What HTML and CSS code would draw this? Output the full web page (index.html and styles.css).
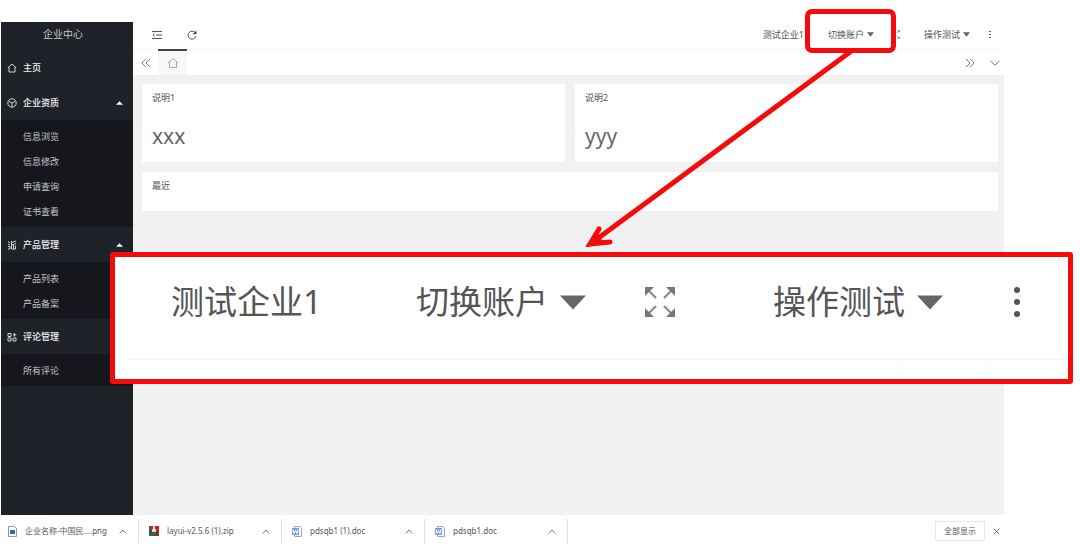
FILE: index.html
```html
<!DOCTYPE html>
<html lang="zh-CN">
<head>
<meta charset="utf-8">
<title>企业中心</title>
<link rel="stylesheet" href="styles.css">
</head>
<body>
<div class="page">
  <div class="app">
    <nav class="sidebar">
      <h1 class="brand">企业中心</h1>
      <a class="group" href="#">
        <svg class="icon" viewBox="0 0 10 10"><path d="M.8 4.800 5 1l4.200 3.800M2 4v5h6V4"/></svg>
        <span>主页</span>
      </a>
      <button class="group" type="button">
        <svg class="icon" viewBox="0 0 10 10"><circle cx="5" cy="5" r="4.200"/><path d="M2 3.500 5 5l3-1.500M5 5v4"/></svg>
        <span>企业资质</span>
        <svg class="fold" viewBox="0 0 8 4"><path d="M0 4 4 0l4 4z"/></svg>
      </button>
      <div class="sub">
        <a href="#">信息浏览</a>
        <a href="#">信息修改</a>
        <a href="#">申请查询</a>
        <a href="#">证书查看</a>
      </div>
      <button class="group" type="button">
        <svg class="icon" viewBox="0 0 10 10"><path d="M1 1.500 3 3M1 4l2 1M1 6.500h2V9H1M4.500 1v8M5 2.500 9 1M5 5l4-1.500M5 9h3.500V5.500M6.500 5v4"/></svg>
        <span>产品管理</span>
        <svg class="fold" viewBox="0 0 8 4"><path d="M0 4 4 0l4 4z"/></svg>
      </button>
      <div class="sub">
        <a href="#">产品列表</a>
        <a href="#">产品备案</a>
      </div>
      <button class="group" type="button">
        <svg class="icon" viewBox="0 0 10 10"><path d="M1 1.500h3v3H1zM1 6h3v3H1zM6 6h3v3H6zM7.500 1v3.500M5.800 2.800h3.400"/></svg>
        <span>评论管理</span>
        <svg class="fold" viewBox="0 0 8 4"><path d="M0 4 4 0l4 4z"/></svg>
      </button>
      <div class="sub">
        <a href="#">所有评论</a>
      </div>
    </nav>
    <main class="main">
      <header class="topbar">
        <button class="tool" type="button" aria-label="折叠菜单"><svg width="10" height="10" viewBox="0 0 10 10"><path d="M0 1.500h10M4 5h6M0 8.500h10M2.500 3.600 1 5l1.500 1.400"/></svg></button>
        <button class="tool refresh" type="button" aria-label="刷新"><svg width="10" height="10" viewBox="0 0 10 10"><path d="M8.300 2.800A4 4 0 1 0 9 6"/><path class="solid" d="M9.500.5v3.800H5.700z"/></svg></button>
        <span class="company">测试企业1</span>
        <button class="drop" type="button">切换账户<svg class="caret" viewBox="0 0 8 5"><path d="M0 0h8L4 5z"/></svg></button>
        <button class="full" type="button" aria-label="全屏"><svg width="9" height="9" viewBox="0 0 32 32"><use href="#expand"/></svg></button>
        <button class="drop" type="button">操作测试<svg class="caret" viewBox="0 0 8 5"><path d="M0 0h8L4 5z"/></svg></button>
        <button class="more" type="button" aria-label="更多"><svg width="2" height="8" viewBox="0 0 2 8"><path d="M0 0h2v1H0zM0 3h2v1H0zM0 6h2v1H0z"/></svg></button>
      </header>
      <div class="tabs">
        <button class="page-btn" type="button" aria-label="向左"><svg width="10" height="10" viewBox="0 0 10 10"><path d="M5 .8.8 5 5 9.200M9.200.8 5 5l4.200 4.200"/></svg></button>
        <button class="tab" type="button" aria-label="主页"><svg width="12" height="12" viewBox="0 0 12 12"><path d="M1 6 6 1.500 11 6M2.500 5v5.500h7V5"/></svg></button>
        <div class="tab-tools">
          <button type="button" aria-label="向右"><svg width="10" height="10" viewBox="0 0 10 10"><path d="M.8.800 5 5 .8 9.200M5 .8 9.200 5 5 9.200"/></svg></button>
          <button type="button" aria-label="展开"><svg width="10" height="10" viewBox="0 0 10 10"><path d="M.5 3 5 7l4.500-4"/></svg></button>
        </div>
      </div>
      <div class="cards">
        <section class="card"><h2>说明1</h2><p>xxx</p></section>
        <section class="card"><h2>说明2</h2><p>yyy</p></section>
        <section class="card wide"><h2>最近</h2></section>
      </div>
    </main>
  </div>

  <footer class="downloads">
    <div class="file"><svg width="9" height="11" viewBox="0 0 9 11"><path fill="#fff" stroke="#7d9cc4" d="M.5.5h6l2 2v8h-8z"/><path fill="#2b6cb8" d="M2 4h5v4H2z"/></svg><a href="#">企业名称-中国民....png</a><button type="button" aria-label="选项"><svg width="8" height="5" viewBox="0 0 8 5"><path d="M.8 4.500 4 1l3.200 3.500"/></svg></button></div>
    <div class="file"><svg width="10" height="10" viewBox="0 0 10 10"><path fill="#b52b3a" d="M0 0h10v5H0z"/><path fill="#2a6a4c" d="M0 5h10v5H0z"/><path fill="#39487c" d="M0 3h3v4H0z"/><path fill="#8b3124" d="M7 5h3v5H7z"/><path fill="#f1d9a0" d="M4 0h2v3h1v3H3V3h1z"/></svg><a href="#">layui-v2.5.6 (1).zip</a><button type="button" aria-label="选项"><svg width="8" height="5" viewBox="0 0 8 5"><path d="M.8 4.500 4 1l3.200 3.500"/></svg></button></div>
    <div class="file"><svg width="10" height="11" viewBox="0 0 10 11"><path fill="#fff" stroke="#8fa6dc" d="M2.500.5h5l2 2v8h-7z"/><path fill="#7f9be6" d="M0 2h7v7H0z"/><path fill="none" stroke="#fff" d="m1 3.500 1 4 1.500-3 1.500 3 1-4"/></svg><a href="#">pdsqb1 (1).doc</a><button type="button" aria-label="选项"><svg width="8" height="5" viewBox="0 0 8 5"><path d="M.8 4.500 4 1l3.200 3.500"/></svg></button></div>
    <div class="file"><svg width="10" height="11" viewBox="0 0 10 11"><path fill="#fff" stroke="#8fa6dc" d="M2.500.5h5l2 2v8h-7z"/><path fill="#7f9be6" d="M0 2h7v7H0z"/><path fill="none" stroke="#fff" d="m1 3.500 1 4 1.500-3 1.500 3 1-4"/></svg><a href="#">pdsqb1.doc</a><button type="button" aria-label="选项"><svg width="8" height="5" viewBox="0 0 8 5"><path d="M.8 4.500 4 1l3.200 3.500"/></svg></button></div>
    <button class="show-all" type="button">全部显示</button>
    <button class="close" type="button" aria-label="关闭"><svg width="7" height="7" viewBox="0 0 7 7"><path d="m.7.700 5.600 5.600M6.300.700.7 6.300"/></svg></button>
  </footer>

  <div class="callout">
    <div class="callout-bar">
      <span>测试企业1</span>
      <button class="big-drop account" type="button">切换账户<svg class="big-caret" viewBox="0 0 28 15"><path d="M0 0h28L14 15z"/></svg></button>
      <button class="big-full" type="button" aria-label="全屏"><svg width="32" height="32" viewBox="0 0 32 32"><g id="expand"><path d="M12 12 4 4M20 12l8-8M12 20l-8 8M20 20l8 8"/><path class="solid" d="M1 1h9l-9 9zM31 1v9l-9-9zM1 31v-9l9 9zM31 31h-9l9-9z"/></g></svg></button>
      <button class="big-drop" type="button">操作测试<svg class="big-caret" viewBox="0 0 28 15"><path d="M0 0h28L14 15z"/></svg></button>
      <button class="big-more" type="button" aria-label="更多"><svg width="6" height="30" viewBox="0 0 6 30"><circle cx="3" cy="3" r="3"/><circle cx="3" cy="15" r="3"/><circle cx="3" cy="27" r="3"/></svg></button>
    </div>
    <div class="callout-foot"><i></i></div>
  </div>
  <div class="mark"></div>
  <svg class="arrow" width="276" height="206" viewBox="0 0 276 206"><path d="M270 3 13 193M19 180 10 195l20-2"/><path class="tip" d="m6 198 11-18 2 9 9 5z"/></svg>
</div>
</body>
</html>
```
FILE: styles.css
```css
* { box-sizing: border-box; }
body {
  margin: 0;
  background: #fff;
  color: #555;
  font: 9px/12px "Noto Sans", "Noto Sans CJK SC", sans-serif;
}
button { margin: 0; padding: 0; border: 0; background: none; color: inherit; font: inherit; }
a { color: inherit; text-decoration: none; }
svg { display: block; flex: none; }
h1, h2, p { margin: 0; font-weight: 400; }

.page { position: relative; min-height: 100vh; padding-top: 22px; display: flex; flex-direction: column; }
.app { flex: 1; display: flex; margin: 0 76px 0 1px; }

.sidebar { width: 132px; background: #20222a; color: #c5c6c9; display: flex; flex-direction: column; }
.brand { height: 24px; margin-bottom: 4px; padding-right: 8px; font-size: 10px; line-height: 24px; text-align: center; }
.group { height: 35px; padding: 0 10px 0 6px; display: flex; align-items: center; gap: 6px; color: #f2f2f2; font-weight: 500; text-align: left; }
.icon { width: 10px; height: 10px; fill: none; stroke: #d5d5d8; stroke-width: 1; }
.fold { width: 7px; height: 4px; margin-left: auto; fill: #fff; }
.sub { padding: 4px 0 3px; background: #16171d; display: flex; flex-direction: column; }
.sub a { height: 25px; padding-left: 22px; line-height: 25px; }

.main { flex: 1; min-width: 0; background: #f1f1f1; display: flex; flex-direction: column; }
.topbar { height: 28px; padding: 0 13px 2px 19px; background: #fff; border-bottom: 1px solid #f8f8f8; display: flex; align-items: center; }
.tool svg, .page-btn svg, .tab svg, .tab-tools svg { fill: none; stroke: #555; stroke-width: 1; }
.refresh { margin-left: 25px; }
.topbar .solid, .callout .solid { fill: #777; stroke: none; }
.topbar .refresh .solid { fill: #444; }
.company { margin-left: auto; }
.drop { display: flex; align-items: center; gap: 3px; margin-left: 24px; }
.caret { width: 7px; height: 5px; fill: #666; }
.full { margin-left: 17px; }
.full svg { stroke: #999; stroke-width: 3; }
.more { margin-left: 19px; }
.more svg { fill: #666; }

.tabs { height: 25px; background: #fff; display: flex; align-items: stretch; }
.page-btn { width: 25px; display: flex; align-items: center; justify-content: center; }
.tabs .page-btn svg, .tab-tools svg { stroke: #777; }
.tab-tools { margin-left: auto; padding-right: 4px; display: flex; align-items: center; gap: 15px; }
.tab { width: 29px; background: #f8f8f9; border-top: 2px solid #40434b; margin-top: -1px; display: flex; align-items: center; justify-content: center; }
.tabs .tab svg { stroke: #aaa; }

.cards { padding: 9px 6px 9px 9px; display: grid; grid-template-columns: 1fr 1fr; gap: 10px; }
.card { min-height: 78px; padding: 7px 10px; background: #fff; border-radius: 1px; }
.card h2 { font-size: 9px; line-height: 14px; }
.card p { margin-top: 16px; font-size: 21px; line-height: 30px; color: #666; }
.wide { grid-column: 1 / -1; min-height: 39px; }

.downloads { height: 32px; padding-right: 80px; display: flex; align-items: center; color: #555; font-size: 8px; }
.file { width: 143px; height: 24px; padding: 0 11px 0 10px; border-right: 1px solid #dedede; display: flex; align-items: center; gap: 8px; white-space: nowrap; }
.file:first-child { width: 139px; padding-left: 8px; }
.file button { margin-left: auto; }
.file button svg, .close svg { fill: none; stroke: #777; stroke-width: 1; }
.show-all { margin-left: auto; width: 50px; height: 20px; border: 1px solid #e8e8e8; }
.close { margin-left: 8px; }

.callout { position: absolute; top: 252px; left: 110px; right: 7px; height: 132px; border: 5px solid #f60a0c; border-radius: 3px; background: #fff; color: #555; font-size: 33px; line-height: 40px; display: flex; flex-direction: column; }
.callout-bar { height: 103px; margin-left: 12px; padding: 0 48px 12px 44px; border-bottom: 1px solid #f4f4f4; display: flex; align-items: center; }
.callout-bar button { line-height: 40px; }
.big-drop { display: flex; align-items: center; gap: 12px; }
.account { margin-left: 94px; }
.big-caret { width: 26px; height: 15px; fill: #666; }
.big-full { margin: 0 auto 0 58px; }
.big-full svg { stroke: #888; stroke-width: 2; }
.big-more { margin-left: 71px; }
.big-more svg { fill: #555; }
.callout-foot { flex: 1; display: flex; justify-content: flex-end; }
.callout-foot i { width: 96px; margin-right: 76px; border: solid #fafafa; border-width: 0 1px; }

.mark { position: absolute; top: 9px; right: 184px; width: 91px; height: 44px; border: 5px solid #f60a0c; border-radius: 7px; }
.arrow { position: absolute; top: 49px; right: 224px; fill: none; stroke: #f60a0c; stroke-width: 5; stroke-linecap: round; }
.arrow .tip { fill: #f60a0c; stroke: none; }
```
